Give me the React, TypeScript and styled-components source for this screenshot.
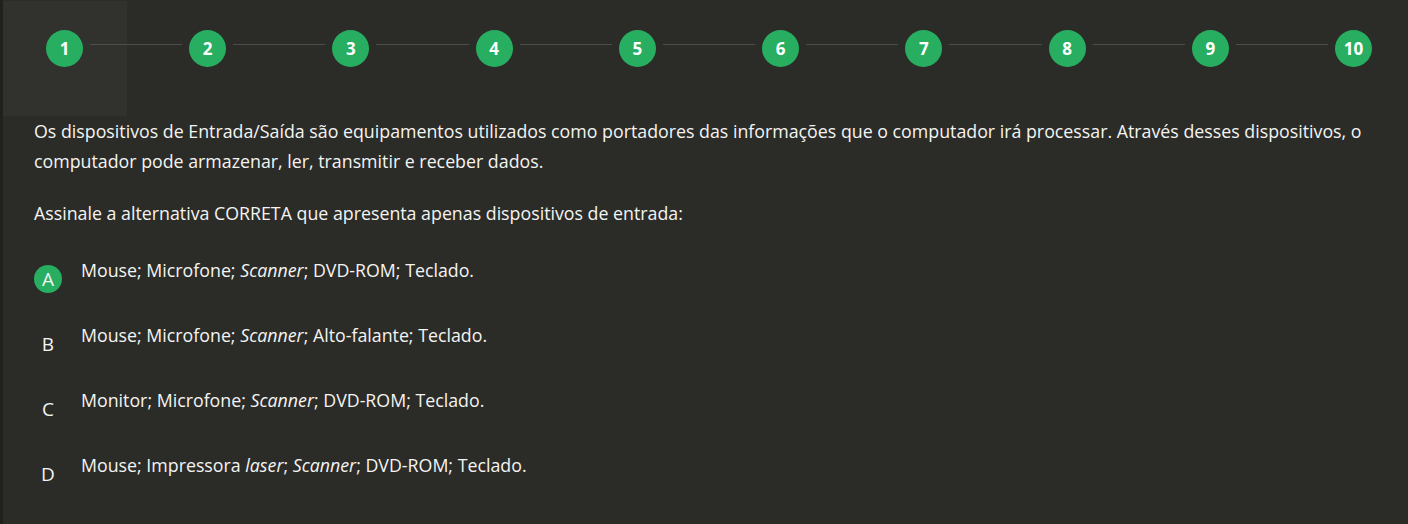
import React from 'react';
import styled, { createGlobalStyle } from 'styled-components';

const COLORS = {
  page: '#2b2b28',
  stripe: '#20201d',
  active: '#31312e',
  line: '#4d4d49',
  green: '#27ae60',
  text: '#f4f4f2'
};

const GlobalStyle = createGlobalStyle`
  html, body {
    margin: 0;
    padding: 0;
    background: ${COLORS.page};
  }
  body {
    font-family: 'Open Sans', 'Noto Sans', sans-serif;
    color: ${COLORS.text};
  }
`;

type Option = {
  letter: string;
  parts: { text: string; italic?: boolean }[];
};

const OPTIONS: Option[] = [
  {
    letter: 'A',
    parts: [
      { text: 'Mouse; Microfone; ' },
      { text: 'Scanner', italic: true },
      { text: '; DVD-ROM; Teclado.' }
    ]
  },
  {
    letter: 'B',
    parts: [
      { text: 'Mouse; Microfone; ' },
      { text: 'Scanner', italic: true },
      { text: '; Alto-falante; Teclado.' }
    ]
  },
  {
    letter: 'C',
    parts: [
      { text: 'Monitor; Microfone; ' },
      { text: 'Scanner', italic: true },
      { text: '; DVD-ROM; Teclado.' }
    ]
  },
  {
    letter: 'D',
    parts: [
      { text: 'Mouse; Impressora ' },
      { text: 'laser', italic: true },
      { text: '; ' },
      { text: 'Scanner', italic: true },
      { text: '; DVD-ROM; Teclado.' }
    ]
  }
];

const STEPS = [1, 2, 3, 4, 5, 6, 7, 8, 9, 10];

const App = () => (
  <>
    <GlobalStyle />
    <Page>
      <Stepper>
        {STEPS.map((n, i) => (
          <React.Fragment key={n}>
            <Step active={i === 0}>
              <StepCircle>{n}</StepCircle>
            </Step>
            {i < STEPS.length - 1 && <Connector />}
          </React.Fragment>
        ))}
      </Stepper>

      <Question>
        <Paragraph>
          Os dispositivos de Entrada/Saída são equipamentos utilizados como
          portadores das informações que o computador irá processar. Através
          desses dispositivos, o computador pode armazenar, ler, transmitir e
          receber dados.
        </Paragraph>
        <Paragraph>
          Assinale a alternativa CORRETA que apresenta apenas dispositivos de
          entrada:
        </Paragraph>
      </Question>

      <Options>
        {OPTIONS.map(opt => (
          <OptionRow key={opt.letter}>
            <Letter selected={opt.letter === 'A'}>{opt.letter}</Letter>
            <OptionText>
              {opt.parts.map((p, idx) =>
                p.italic ? <em key={idx}>{p.text}</em> : <span key={idx}>{p.text}</span>
              )}
            </OptionText>
          </OptionRow>
        ))}
      </Options>
    </Page>
  </>
);

export default App;

const Page = styled.div`
  min-height: 524px;
  box-sizing: border-box;
  border-left: 3px solid ${COLORS.stripe};
  background: ${COLORS.page};
`;

const Stepper = styled.div`
  display: flex;
  align-items: center;
  height: 96px;
  margin-bottom: 19px;
  padding: 0 36px 0 43px;
`;

// the current question gets a lighter tile behind its number
const Step = styled.div<{ active?: boolean }>`
  position: relative;
  flex: none;
  width: 37px;
  height: 37px;
  &::before {
    content: '';
    display: ${({ active }) => (active ? 'block' : 'none')};
    position: absolute;
    left: 50%;
    top: -29px;
    width: 124px;
    height: 115px;
    transform: translateX(-50%);
    background: ${COLORS.active};
  }
`;

const StepCircle = styled.div`
  position: relative;
  width: 37px;
  height: 37px;
  border-radius: 50%;
  background: ${COLORS.green};
  color: #fff;
  display: flex;
  align-items: center;
  justify-content: center;
  font-weight: 700;
  font-size: 17px;
`;

const Connector = styled.div`
  position: relative;
  flex: 1;
  height: 1px;
  margin: 0 7px 7px;
  background: ${COLORS.line};
`;

const Question = styled.div`
  padding: 1px 30px 0 31px;
`;

const Paragraph = styled.p`
  margin: 0 0 22px;
  font-size: 17.8px;
  line-height: 30px;
`;

const Options = styled.div`
  display: flex;
  flex-direction: column;
  gap: 27px;
  padding: 5px 34px 0 31px;
`;

const OptionRow = styled.div`
  display: flex;
  align-items: flex-start;
`;

const Letter = styled.div<{ selected?: boolean }>`
  flex: none;
  width: 28px;
  height: 28px;
  margin: 10px 19px 0 0;
  border-radius: 50%;
  background: ${({ selected }) => (selected ? COLORS.green : 'transparent')};
  display: flex;
  align-items: center;
  justify-content: center;
  font-size: 19px;
`;

const OptionText = styled.div`
  font-size: 17.8px;
  line-height: 30px;
  em {
    font-style: italic;
  }
`;
